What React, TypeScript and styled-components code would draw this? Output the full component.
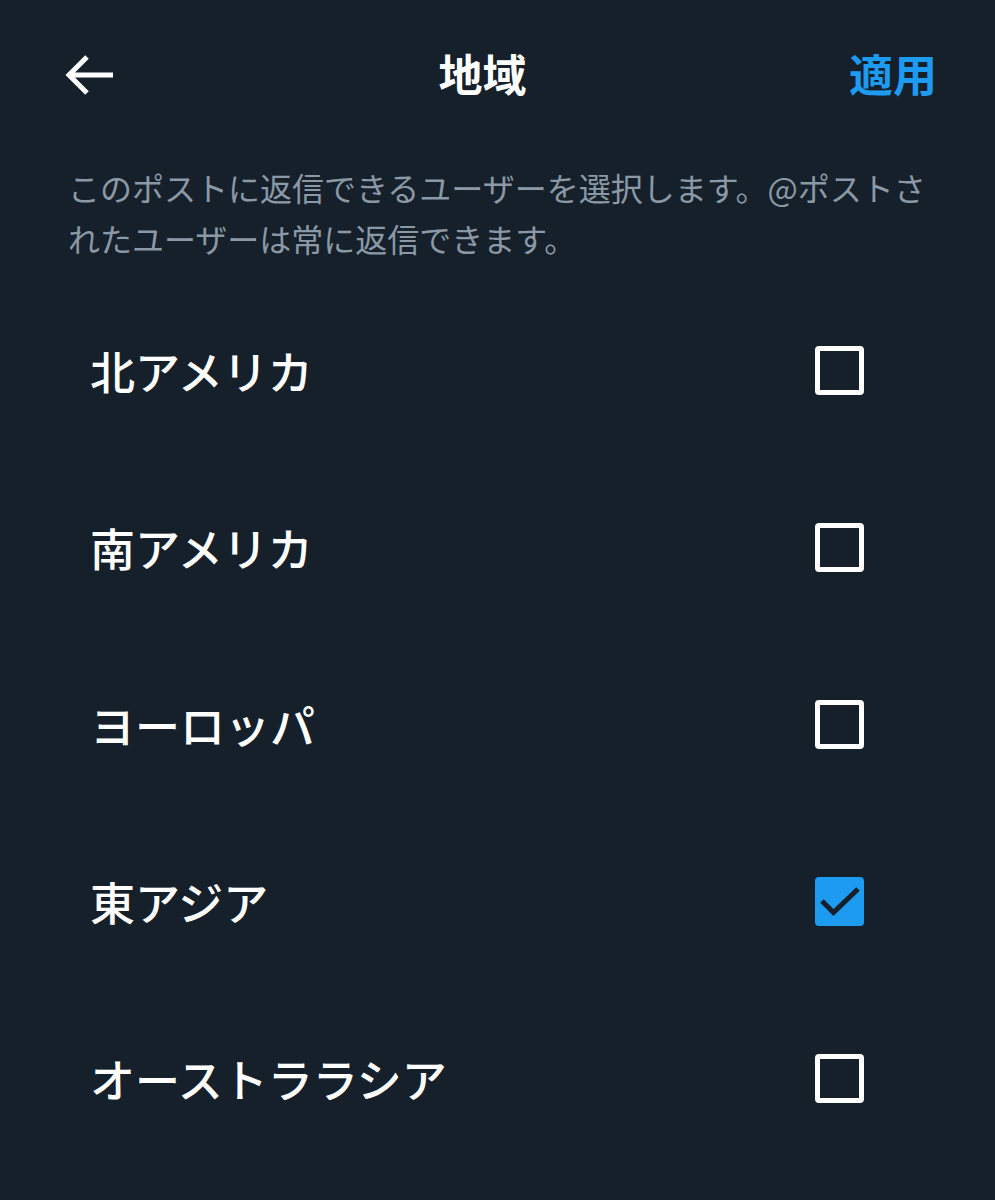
import React, { useState } from "react";
import styled, { createGlobalStyle } from "styled-components";

const GlobalStyle = createGlobalStyle`
  html, body {
    margin: 0;
    padding: 0;
    background: #15202b;
  }
  body {
    font-family: "Noto Sans CJK JP", "Noto Sans", sans-serif;
    color: #ffffff;
  }
`;

const Page = styled.div`
  width: 995px;
  min-height: 1200px;
  background: #15202b;
  display: flex;
  flex-direction: column;
`;

const Header = styled.header`
  height: 150px;
  display: flex;
  align-items: center;
  justify-content: space-between;
  padding: 0 58px 0 64px;
  box-sizing: border-box;
`;

const IconButton = styled.button`
  background: none;
  border: none;
  padding: 0;
  width: 52px;
  height: 48px;
  display: flex;
  align-items: center;
  justify-content: center;
  cursor: pointer;
`;

const Title = styled.h1`
  margin: 0;
  font-size: 44px;
  font-weight: 700;
  line-height: 1;
  color: #ffffff;
  position: relative;
  top: -2px;
`;

const ApplyButton = styled.button`
  background: none;
  border: none;
  padding: 0;
  font-family: inherit;
  font-size: 44px;
  font-weight: 700;
  line-height: 1;
  color: #1d9bf0;
  cursor: pointer;
  position: relative;
  top: -2px;
`;

const Description = styled.p`
  margin: 12px 0 0 68px;
  font-size: 32px;
  line-height: 51px;
  color: #8b98a5;
  font-weight: 400;
  white-space: nowrap;
`;

const List = styled.ul`
  list-style: none;
  margin: 18px 0 0;
  padding: 0;
`;

const Row = styled.li`
  height: 177px;
  display: flex;
  align-items: center;
  justify-content: space-between;
  padding: 0 131px 0 90px;
  box-sizing: border-box;
  cursor: pointer;
`;

const Label = styled.span`
  font-size: 45px;
  font-weight: 500;
  color: #ffffff;
  line-height: 1;
`;

const Box = styled.span<{ $checked: boolean }>`
  width: 49px;
  height: 49px;
  box-sizing: border-box;
  border-radius: 4px;
  border: ${(p) => (p.$checked ? "none" : "5px solid #ffffff")};
  background: ${(p) => (p.$checked ? "#1d9bf0" : "transparent")};
  display: flex;
  align-items: center;
  justify-content: center;
`;

const regions = ["北アメリカ", "南アメリカ", "ヨーロッパ", "東アジア", "オーストララシア"];

export default function App() {
  const [selected, setSelected] = useState<Record<string, boolean>>({ 東アジア: true });
  return (
    <>
      <GlobalStyle />
      <Page>
        <Header>
          <IconButton aria-label="戻る">
            <svg width="50" height="42" viewBox="0 0 50 42" fill="none">
              <path
                d="M48 21H5M22 3L4 21l18 18"
                stroke="#ffffff"
                strokeWidth="5"
                strokeLinecap="butt"
                strokeLinejoin="miter"
              />
            </svg>
          </IconButton>
          <Title>地域</Title>
          <ApplyButton>適用</ApplyButton>
        </Header>
        <Description>
          このポストに返信できるユーザーを選択します。@ポストさ
          <br />
          れたユーザーは常に返信できます。
        </Description>
        <List>
          {regions.map((r) => {
            const checked = !!selected[r];
            return (
              <Row key={r} onClick={() => setSelected((s) => ({ ...s, [r]: !s[r] }))}>
                <Label>{r}</Label>
                <Box $checked={checked}>
                  {checked && (
                    <svg width="49" height="49" viewBox="0 0 49 49" fill="none">
                      <path d="M7 24l11.5 11.5L43 12" stroke="#15202b" strokeWidth="5" />
                    </svg>
                  )}
                </Box>
              </Row>
            );
          })}
        </List>
      </Page>
    </>
  );
}
